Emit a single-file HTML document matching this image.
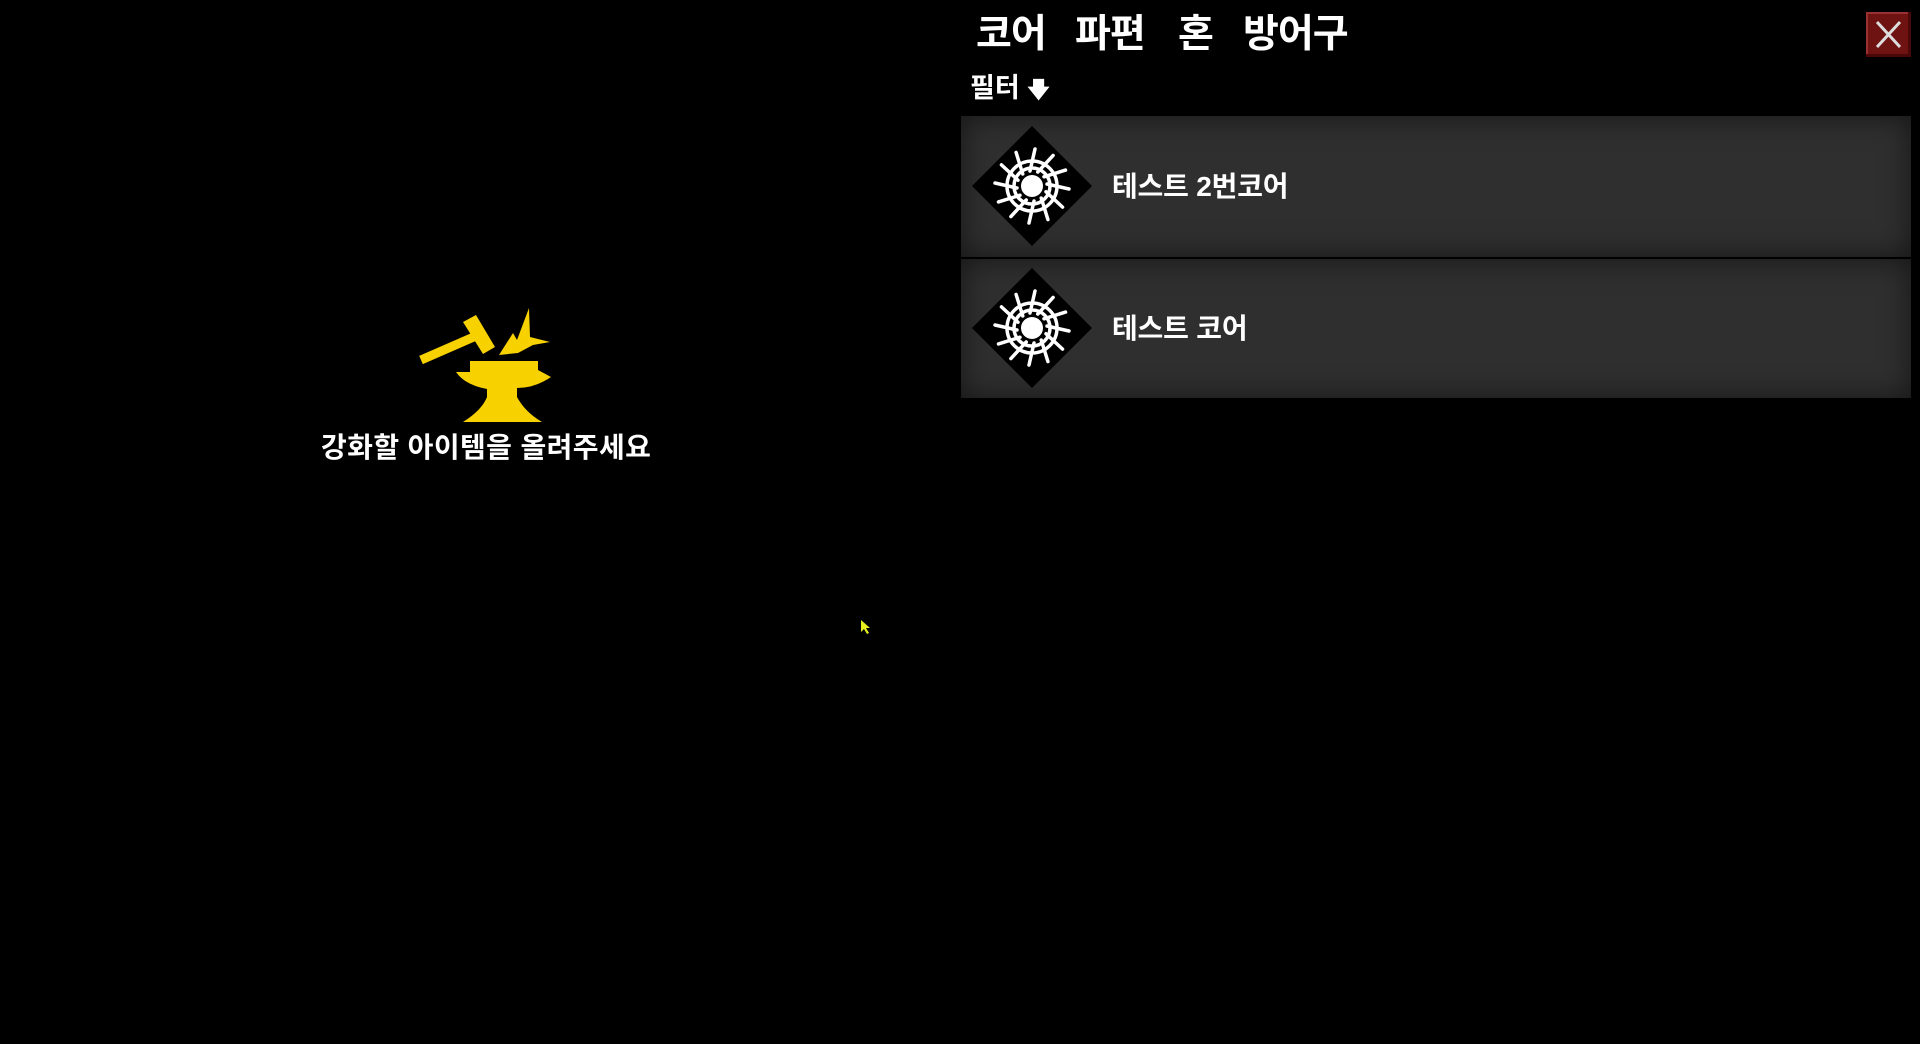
<!DOCTYPE html>
<html><head><meta charset="utf-8"><style>
html,body{margin:0;padding:0;background:#000;width:1920px;height:1044px;overflow:hidden;font-family:"Liberation Sans","Noto Sans CJK KR",sans-serif;color:#fff}
.abs{position:absolute;white-space:nowrap}
.tab{font-size:39px;top:9px;line-height:52px;font-weight:bold;letter-spacing:-1px}
.row{position:absolute;left:961px;width:950px;background:#2f2f2f;box-shadow:inset 0 0 30px rgba(0,0,0,.55)}
.row span{position:absolute;left:151px;font-size:28px;line-height:40px;font-weight:bold;letter-spacing:-0.2px}
</style></head><body>
<div class="abs tab" style="left:976px">코어</div>
<div class="abs tab" style="left:1075px">파편</div>
<div class="abs tab" style="left:1178px">혼</div>
<div class="abs tab" style="left:1243px">방어구</div>
<div class="abs" style="left:970px;top:70px;font-size:27px;line-height:36px;font-weight:bold">필터 <span style="font-size:22px">🡇</span></div>
<div class="abs" style="left:1866px;top:12px;width:45px;height:45px;background:#6e1212;box-shadow:inset -3px -3px 0 #4a0808,inset 2px 2px 0 #9a3030"></div>
<svg class="abs" style="left:1866px;top:12px" width="45" height="45"><path d="M11 10L34 35M34 10L11 35" stroke="#ddd" stroke-width="3"/></svg>
<div class="row" style="top:116px;height:141px"><span style="top:51px">테스트 2번코어</span></div>
<div class="row" style="top:259px;height:139px"><span style="top:50px">테스트 코어</span></div>
<svg class="abs" style="left:0;top:0" width="1920" height="1044">
<defs><g id="core">
<polygon points="0,-60 60,0 0,60 -60,0" fill="#000"/>
<circle r="11" fill="#fff"/>
<circle r="18" fill="none" stroke="#fff" stroke-width="3.5"/>
<circle r="25" fill="none" stroke="#fff" stroke-width="3.5"/>
<g stroke="#fff" stroke-width="3.5" stroke-linecap="round">
<line x1="-2" y1="-15" x2="3" y2="-37"/>
<line x1="-2" y1="-15" x2="3" y2="-37" transform="rotate(30)"/>
<line x1="-2" y1="-15" x2="3" y2="-37" transform="rotate(60)"/>
<line x1="-2" y1="-15" x2="3" y2="-37" transform="rotate(90)"/>
<line x1="-2" y1="-15" x2="3" y2="-37" transform="rotate(120)"/>
<line x1="-2" y1="-15" x2="3" y2="-37" transform="rotate(150)"/>
<line x1="-2" y1="-15" x2="3" y2="-37" transform="rotate(180)"/>
<line x1="-2" y1="-15" x2="3" y2="-37" transform="rotate(210)"/>
<line x1="-2" y1="-15" x2="3" y2="-37" transform="rotate(240)"/>
<line x1="-2" y1="-15" x2="3" y2="-37" transform="rotate(270)"/>
<line x1="-2" y1="-15" x2="3" y2="-37" transform="rotate(300)"/>
<line x1="-2" y1="-15" x2="3" y2="-37" transform="rotate(330)"/>
</g></g></defs>
<use href="#core" x="1032" y="186"/>
<use href="#core" x="1032" y="328"/>
<g fill="#f7d100">
<line x1="421" y1="360" x2="476" y2="336" stroke="#f7d100" stroke-width="9"/>
<polygon points="463,322 476,315 495,347 483,354"/>
<polygon points="499,355 513,333 517,340 529,308 530,337 550,342 533,345 518,353"/>
<path d="M470,361 L538,361 L538,370 L551,377 Q535,388 517,388 L517,397 Q525,412 542,422 L463,422 Q482,410 487,397 L487,389 Q465,385 456,372 L470,372 Z"/>
<polygon points="861,620 861,632 864,629 867,634 869,633 866,628 870,628" fill="#e8f020"/>
</g>
</svg>
<div class="abs" style="left:321px;top:427px;font-size:28px;line-height:42px;font-weight:bold;letter-spacing:0.4px">강화할 아이템을 올려주세요</div>
</body></html>
